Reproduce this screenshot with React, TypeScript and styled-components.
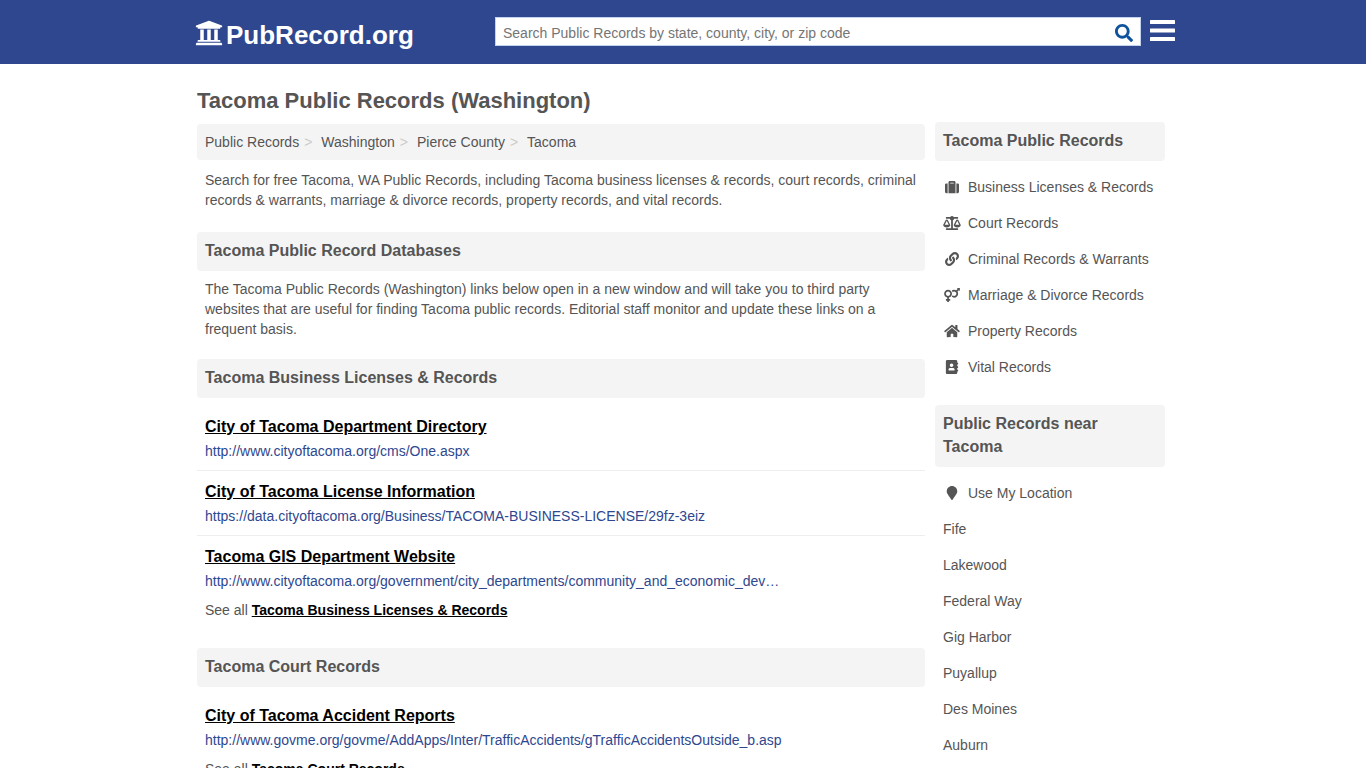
import React from "react";
import styled, { createGlobalStyle } from "styled-components";
import {
  FaUniversity,
  FaSearch,
  FaSuitcase,
  FaBalanceScale,
  FaLink,
  FaVenusMars,
  FaHome,
  FaAddressBook,
  FaMapMarker,
} from "react-icons/fa";
import type { IconType } from "react-icons";

const GlobalStyle = createGlobalStyle`
  *, *::before, *::after { box-sizing: border-box; }
  body {
    margin: 0;
    background: #fff;
    color: #555;
    font: 14px/20px "Liberation Sans", Arial, sans-serif;
  }
  h1, h2, h3, p, ul, ol { margin: 0; padding: 0; }
  ul, ol { list-style: none; }
  a { color: inherit; text-decoration: none; }
`;

const Header = styled.header`
  background: #2e478f;
`;

const HeaderInner = styled.div`
  display: flex;
  align-items: center;
  max-width: 984px;
  min-height: 64px;
  margin: 0 auto;
  padding-left: 4px;

  @media (max-width: 760px) {
    flex-wrap: wrap;
    gap: 8px;
    padding: 8px;
  }
`;

const Logo = styled.a`
  display: flex;
  align-items: center;
  gap: 3px;
  flex: 0 0 300px;
  padding-top: 6px;
  color: #fff;
  font-size: 26px;
  font-weight: bold;
  line-height: 30px;

  svg {
    width: 28px;
    height: 28px;
    margin-bottom: 4px;
  }
`;

const SearchForm = styled.form`
  display: flex;
  flex: 1;
  height: 29px;
  min-width: 0;
  margin: 0 9px 1px 0;
  background: #fff;
  border: 1px solid #c3d3ee;
`;

const SearchInput = styled.input`
  flex: 1;
  min-width: 0;
  padding: 2px 7px 0;
  border: 0;
  outline: 0;
  background: transparent;
  color: #555;
  font: inherit;

  &::placeholder {
    color: #757575;
    opacity: 1;
  }
`;

const SearchButton = styled.button`
  display: flex;
  align-items: center;
  justify-content: center;
  width: 32px;
  padding: 2px 0 0;
  border: 0;
  background: transparent;
  color: #0f539c;
  font-size: 18px;
  cursor: pointer;
`;

const MenuButton = styled.button`
  display: flex;
  padding: 0 0 3px;
  border: 0;
  background: transparent;
  color: #fff;
  cursor: pointer;
`;

const Page = styled.div`
  display: grid;
  grid-template-columns: minmax(0, 1fr) 230px;
  column-gap: 10px;
  align-items: start;
  max-width: 980px;
  margin: 0 auto;
  padding: 0 8px 0 4px;

  @media (max-width: 760px) {
    grid-template-columns: minmax(0, 1fr);
  }
`;

const Main = styled.main`
  padding-top: 22px;
`;

const Sidebar = styled.aside`
  padding-top: 58px;
`;

const PageTitle = styled.h1`
  margin-bottom: 8px;
  font-size: 22px;
  line-height: 30px;
`;

const Breadcrumbs = styled.ol`
  display: flex;
  flex-wrap: wrap;
  padding: 8px;
  border-radius: 4px;
  background: #f4f4f4;
`;

const Crumb = styled.li`
  &:not(:last-child)::after {
    content: ">";
    margin: 0 9px 0 5px;
    color: #ccc;
  }
`;

const Intro = styled.p`
  padding: 10px 8px 22px;
`;

const Section = styled.section`
  margin-bottom: 20px;
`;

const SectionTitle = styled.h2`
  margin-bottom: 8px;
  padding: 7px 8px 9px;
  border-radius: 4px;
  background: #f4f4f4;
  font-size: 16px;
  line-height: 23px;
`;

const SectionText = styled.p`
  padding: 0 8px;
`;

const LinkItem = styled.li`
  padding: 11px 8px 9px;

  &:not(:last-child) {
    border-bottom: 1px solid #eee;
  }
`;

const LinkTitle = styled.a`
  display: inline-block;
  margin-bottom: 4px;
  color: #000;
  font-size: 16px;
  font-weight: bold;
  text-decoration: underline;
`;

const LinkUrl = styled.p`
  overflow: hidden;
  color: #2e478f;
  text-overflow: ellipsis;
  white-space: nowrap;
`;

const SeeAll = styled.p`
  padding: 0 8px 8px;

  a {
    color: #000;
    font-weight: bold;
    text-decoration: underline;
  }
`;

const SideLink = styled.a`
  display: flex;
  align-items: center;
  gap: 7px;
  padding: 8px;

  svg {
    width: 18px;
    height: 14px;
  }
`;

type Entry = { title: string; url: string };

const businessLinks: Entry[] = [
  { title: "City of Tacoma Department Directory", url: "http://www.cityoftacoma.org/cms/One.aspx" },
  {
    title: "City of Tacoma License Information",
    url: "https://data.cityoftacoma.org/Business/TACOMA-BUSINESS-LICENSE/29fz-3eiz",
  },
  {
    title: "Tacoma GIS Department Website",
    url: "http://www.cityoftacoma.org/government/city_departments/community_and_economic_dev…",
  },
];

const courtLinks: Entry[] = [
  {
    title: "City of Tacoma Accident Reports",
    url: "http://www.govme.org/govme/AddApps/Inter/TrafficAccidents/gTrafficAccidentsOutside_b.asp",
  },
];

const categories: { label: string; Icon: IconType }[] = [
  { label: "Business Licenses & Records", Icon: FaSuitcase },
  { label: "Court Records", Icon: FaBalanceScale },
  { label: "Criminal Records & Warrants", Icon: FaLink },
  { label: "Marriage & Divorce Records", Icon: FaVenusMars },
  { label: "Property Records", Icon: FaHome },
  { label: "Vital Records", Icon: FaAddressBook },
];

const places = ["Fife", "Lakewood", "Federal Way", "Gig Harbor", "Puyallup", "Des Moines", "Auburn"];

function RecordSection({ name, links }: { name: string; links: Entry[] }) {
  return (
    <Section>
      <SectionTitle>{name}</SectionTitle>
      <ul>
        {links.map((link) => (
          <LinkItem key={link.title}>
            <LinkTitle href="#">{link.title}</LinkTitle>
            <LinkUrl>{link.url}</LinkUrl>
          </LinkItem>
        ))}
      </ul>
      <SeeAll>
        See all <a href="#">{name}</a>
      </SeeAll>
    </Section>
  );
}

export default function App() {
  return (
    <>
      <GlobalStyle />
      <Header>
        <HeaderInner>
          <Logo href="#">
            <FaUniversity aria-hidden />
            PubRecord.org
          </Logo>
          <SearchForm role="search" onSubmit={(e) => e.preventDefault()}>
            <SearchInput
              type="text"
              aria-label="Search Public Records"
              placeholder="Search Public Records by state, county, city, or zip code"
            />
            <SearchButton type="submit" aria-label="Search">
              <FaSearch />
            </SearchButton>
          </SearchForm>
          <MenuButton type="button" aria-label="Menu">
            <svg width="25" height="21" viewBox="0 0 25 21" fill="currentColor" aria-hidden>
              <rect width="25" height="4" rx="0.5" />
              <rect y="8.5" width="25" height="4" rx="0.5" />
              <rect y="17" width="25" height="4" rx="0.5" />
            </svg>
          </MenuButton>
        </HeaderInner>
      </Header>
      <Page>
        <Main>
          <PageTitle>Tacoma Public Records (Washington)</PageTitle>
          <nav aria-label="Breadcrumb">
            <Breadcrumbs>
              {["Public Records", "Washington", "Pierce County", "Tacoma"].map((crumb) => (
                <Crumb key={crumb}>
                  <a href="#">{crumb}</a>
                </Crumb>
              ))}
            </Breadcrumbs>
          </nav>
          <Intro>
            Search for free Tacoma, WA Public Records, including Tacoma business licenses &amp; records, court
            records, criminal records &amp; warrants, marriage &amp; divorce records, property records, and vital
            records.
          </Intro>
          <Section>
            <SectionTitle>Tacoma Public Record Databases</SectionTitle>
            <SectionText>
              The Tacoma Public Records (Washington) links below open in a new window and will take you to third
              party websites that are useful for finding Tacoma public records. Editorial staff monitor and update
              these links on a frequent basis.
            </SectionText>
          </Section>
          <RecordSection name="Tacoma Business Licenses & Records" links={businessLinks} />
          <RecordSection name="Tacoma Court Records" links={courtLinks} />
        </Main>
        <Sidebar>
          <Section>
            <SectionTitle>Tacoma Public Records</SectionTitle>
            <ul>
              {categories.map(({ label, Icon }) => (
                <li key={label}>
                  <SideLink href="#">
                    <Icon aria-hidden />
                    {label}
                  </SideLink>
                </li>
              ))}
            </ul>
          </Section>
          <Section>
            <SectionTitle>Public Records near Tacoma</SectionTitle>
            <ul>
              <li>
                <SideLink href="#">
                  <FaMapMarker aria-hidden />
                  Use My Location
                </SideLink>
              </li>
              {places.map((place) => (
                <li key={place}>
                  <SideLink href="#">{place}</SideLink>
                </li>
              ))}
            </ul>
          </Section>
        </Sidebar>
      </Page>
    </>
  );
}
